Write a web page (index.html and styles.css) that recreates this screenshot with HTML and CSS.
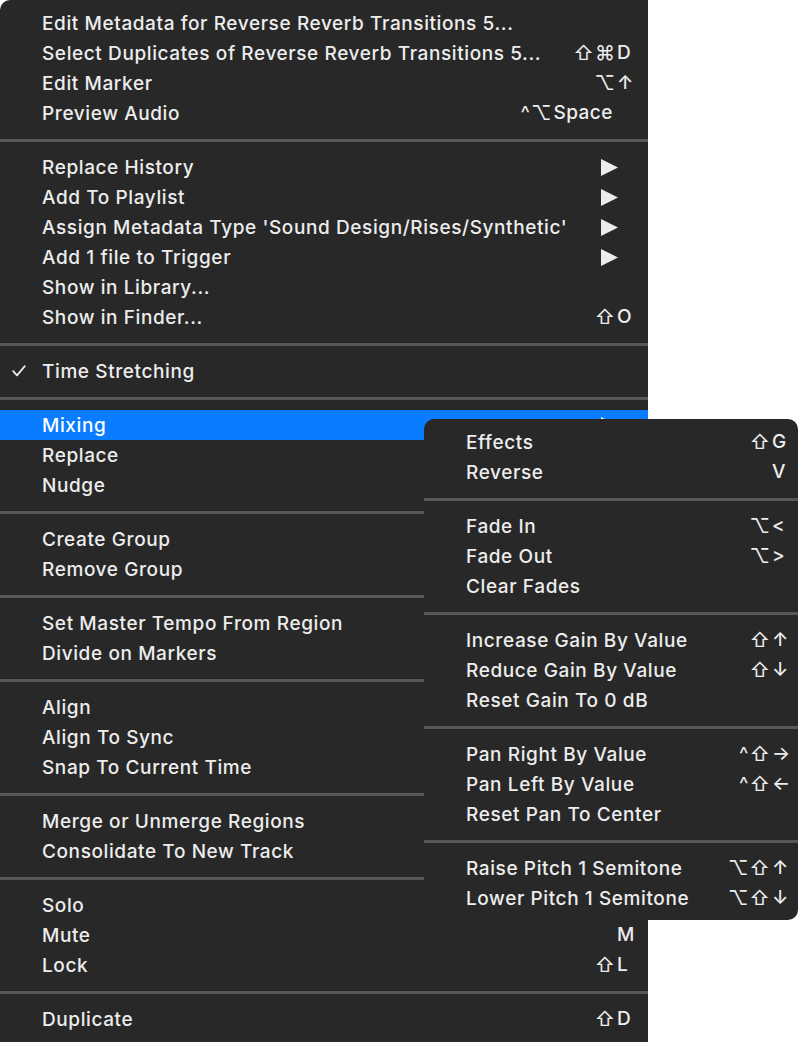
FILE: index.html
```html
<!DOCTYPE html>
<html>
<head>
<meta charset="utf-8">
<link rel="stylesheet" href="styles.css">
</head>
<body>
<div class="menu main">
  <div class="item"><span class="gutter"></span><span class="label">Edit Metadata for Reverse Reverb Transitions 5...</span></div>
  <div class="item"><span class="gutter"></span><span class="label">Select Duplicates of Reverse Reverb Transitions 5...</span><span class="sc"><span class="mods">⇧⌘</span><span class="key">D</span></span></div>
  <div class="item"><span class="gutter"></span><span class="label">Edit Marker</span><span class="sc"><span class="mods">⌥</span><span class="key">↑</span></span></div>
  <div class="item"><span class="gutter"></span><span class="label">Preview Audio</span><span class="sc word"><span class="mods">^⌥</span><span class="keyword">Space</span></span></div>
  <div class="sep"></div>
  <div class="item"><span class="gutter"></span><span class="label">Replace History</span><span class="arrow"><svg width="17" height="17" viewBox="0 0 17 17"><polygon points="0,0 17,8.5 0,17" fill="#ececec"/></svg></span></div>
  <div class="item"><span class="gutter"></span><span class="label">Add To Playlist</span><span class="arrow"><svg width="17" height="17" viewBox="0 0 17 17"><polygon points="0,0 17,8.5 0,17" fill="#ececec"/></svg></span></div>
  <div class="item"><span class="gutter"></span><span class="label">Assign Metadata Type 'Sound Design/Rises/Synthetic'</span><span class="arrow"><svg width="17" height="17" viewBox="0 0 17 17"><polygon points="0,0 17,8.5 0,17" fill="#ececec"/></svg></span></div>
  <div class="item"><span class="gutter"></span><span class="label">Add 1 file to Trigger</span><span class="arrow"><svg width="17" height="17" viewBox="0 0 17 17"><polygon points="0,0 17,8.5 0,17" fill="#ececec"/></svg></span></div>
  <div class="item"><span class="gutter"></span><span class="label">Show in Library...</span></div>
  <div class="item"><span class="gutter"></span><span class="label">Show in Finder...</span><span class="sc"><span class="mods">⇧</span><span class="key">O</span></span></div>
  <div class="sep"></div>
  <div class="item"><span class="gutter"><svg class="check" width="14" height="12" viewBox="0 0 14 12"><polyline points="1.2,6.2 5,10.4 12.8,1.2" fill="none" stroke="#ececec" stroke-width="1.8" stroke-linecap="round" stroke-linejoin="round"/></svg></span><span class="label">Time Stretching</span></div>
  <div class="sep"></div>
  <div class="item active"><span class="gutter"></span><span class="label">Mixing</span><span class="arrow"><svg width="17" height="17" viewBox="0 0 17 17"><polygon points="0,0 17,8.5 0,17" fill="#ffffff"/></svg></span></div>
  <div class="item"><span class="gutter"></span><span class="label">Replace</span></div>
  <div class="item"><span class="gutter"></span><span class="label">Nudge</span></div>
  <div class="sep"></div>
  <div class="item"><span class="gutter"></span><span class="label">Create Group</span></div>
  <div class="item"><span class="gutter"></span><span class="label">Remove Group</span></div>
  <div class="sep"></div>
  <div class="item"><span class="gutter"></span><span class="label">Set Master Tempo From Region</span></div>
  <div class="item"><span class="gutter"></span><span class="label">Divide on Markers</span></div>
  <div class="sep"></div>
  <div class="item"><span class="gutter"></span><span class="label">Align</span></div>
  <div class="item"><span class="gutter"></span><span class="label">Align To Sync</span></div>
  <div class="item"><span class="gutter"></span><span class="label">Snap To Current Time</span></div>
  <div class="sep"></div>
  <div class="item"><span class="gutter"></span><span class="label">Merge or Unmerge Regions</span></div>
  <div class="item"><span class="gutter"></span><span class="label">Consolidate To New Track</span></div>
  <div class="sep"></div>
  <div class="item"><span class="gutter"></span><span class="label">Solo</span></div>
  <div class="item"><span class="gutter"></span><span class="label">Mute</span><span class="sc"><span class="mods"></span><span class="key">M</span></span></div>
  <div class="item"><span class="gutter"></span><span class="label">Lock</span><span class="sc"><span class="mods">⇧</span><span class="key">L</span></span></div>
  <div class="sep"></div>
  <div class="item"><span class="gutter"></span><span class="label">Duplicate</span><span class="sc"><span class="mods">⇧</span><span class="key">D</span></span></div>
</div>

<div class="menu sub">
  <div class="item"><span class="gutter"></span><span class="label">Effects</span><span class="sc"><span class="mods">⇧</span><span class="key">G</span></span></div>
  <div class="item"><span class="gutter"></span><span class="label">Reverse</span><span class="sc"><span class="mods"></span><span class="key">V</span></span></div>
  <div class="sep"></div>
  <div class="item"><span class="gutter"></span><span class="label">Fade In</span><span class="sc"><span class="mods">⌥</span><span class="key">&lt;</span></span></div>
  <div class="item"><span class="gutter"></span><span class="label">Fade Out</span><span class="sc"><span class="mods">⌥</span><span class="key">&gt;</span></span></div>
  <div class="item"><span class="gutter"></span><span class="label">Clear Fades</span></div>
  <div class="sep"></div>
  <div class="item"><span class="gutter"></span><span class="label">Increase Gain By Value</span><span class="sc"><span class="mods">⇧</span><span class="key">↑</span></span></div>
  <div class="item"><span class="gutter"></span><span class="label">Reduce Gain By Value</span><span class="sc"><span class="mods">⇧</span><span class="key">↓</span></span></div>
  <div class="item"><span class="gutter"></span><span class="label">Reset Gain To 0 dB</span></div>
  <div class="sep"></div>
  <div class="item"><span class="gutter"></span><span class="label">Pan Right By Value</span><span class="sc"><span class="mods">^⇧</span><span class="key">→</span></span></div>
  <div class="item"><span class="gutter"></span><span class="label">Pan Left By Value</span><span class="sc"><span class="mods">^⇧</span><span class="key">←</span></span></div>
  <div class="item"><span class="gutter"></span><span class="label">Reset Pan To Center</span></div>
  <div class="sep"></div>
  <div class="item"><span class="gutter"></span><span class="label">Raise Pitch 1 Semitone</span><span class="sc"><span class="mods">⌥⇧</span><span class="key">↑</span></span></div>
  <div class="item"><span class="gutter"></span><span class="label">Lower Pitch 1 Semitone</span><span class="sc"><span class="mods">⌥⇧</span><span class="key">↓</span></span></div>
</div>
</body>
</html>
```
FILE: styles.css
```css
html, body {
  margin: 0;
  padding: 0;
  background: #ffffff;
}
body {
  position: relative;
  width: 800px;
  height: 1042px;
  overflow: hidden;
  font-family: "Inter", "DejaVu Sans", sans-serif;
  font-size: 19px;
  font-weight: 500;
  color: #ededed;
}
.menu {
  background: #282828;
  box-sizing: border-box;
}
.main {
  width: 648px;
  height: 1042px;
  padding-top: 8px;
  border-top-left-radius: 10px;
}
.sub {
  position: absolute;
  left: 424px;
  top: 419px;
  width: 374px;
  height: 501px;
  padding-top: 8px;
  border-radius: 10px;
}
.item {
  height: 30px;
  display: flex;
  align-items: center;
  padding-right: 16px;
  white-space: nowrap;
}
.sub .item {
  padding-right: 12px;
}
.item.active {
  background: #0a7cff;
  color: #ffffff;
}
.gutter {
  width: 42px;
  flex: none;
  display: flex;
  align-items: center;
}
.check {
  margin-left: 12px;
}
.label {
  flex: 1;
  letter-spacing: 0.6px;
}
.sc {
  display: flex;
  align-items: center;
  height: 30px;
}
.mods {
  text-align: right;
  letter-spacing: 1px;
  font-size: 20px;
  font-weight: 400;
  line-height: 30px;
}
.key {
  width: 15px;
  text-align: left;
  margin-left: 1px;
  line-height: 30px;
}
.sub .key {
  width: 14px;
}
.sc.word {
  margin-right: 19px;
}
.keyword {
  margin-left: 1px;
  letter-spacing: 0.5px;
  line-height: 30px;
}
.arrow {
  display: flex;
  margin-right: 14px;
}
.sep {
  height: 24px;
  display: flex;
  align-items: center;
}
.sep::after {
  content: "";
  display: block;
  width: 100%;
  height: 3px;
  background: #575757;
}
```
